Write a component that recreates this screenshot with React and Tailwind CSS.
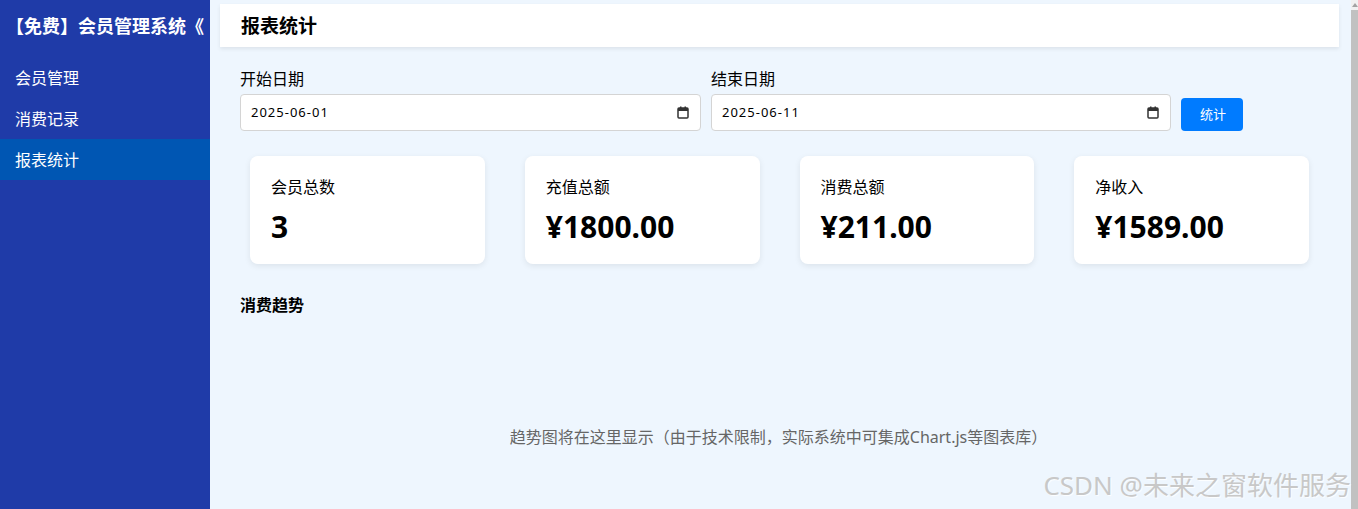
const font = { fontFamily: '"Noto Sans", "Noto Sans CJK SC", sans-serif' }

const menu = ['会员管理', '消费记录', '报表统计']

const stats = [
  { label: '会员总数', value: '3' },
  { label: '充值总额', value: '¥1800.00' },
  { label: '消费总额', value: '¥211.00' },
  { label: '净收入', value: '¥1589.00' },
]

function CalendarIcon() {
  return (
    <svg width="12" height="13" viewBox="0 0 12 13" className="shrink-0">
      <rect x="1" y="2" width="10" height="10" rx="1" fill="none" stroke="#333" strokeWidth="1.5" />
      <rect x="1" y="2" width="10" height="3" fill="#333" />
      <rect x="3" y="0.5" width="1.5" height="2.5" fill="#333" />
      <rect x="7.5" y="0.5" width="1.5" height="2.5" fill="#333" />
    </svg>
  )
}

function DateField({ label, value, width }) {
  return (
    <div className={`flex flex-col gap-[4px] ${width}`}>
      <label className="text-[16px] leading-[21px] text-black">{label}</label>
      <div className="flex h-[37px] items-center justify-between rounded-[4px] border border-[#d4d4d4] bg-white pl-[10px] pr-[11px]">
        <span className="text-[13px] tracking-[1px] text-black">{value}</span>
        <CalendarIcon />
      </div>
    </div>
  )
}

export default function App() {
  return (
    <div className="flex h-[509px] w-full overflow-hidden" style={font}>
      {/* 侧边栏 */}
      <aside className="flex w-[210px] shrink-0 flex-col bg-[#1f3ba8] text-white">
        <div className="flex h-[53px] items-center overflow-hidden whitespace-nowrap pl-[6px] text-[18px] font-bold">
          【免费】会员管理系统《
        </div>
        <nav className="mt-[4px] flex flex-col">
          {menu.map((m) => (
            <div
              key={m}
              className={`flex h-[41px] items-center pl-[15px] pt-[1px] text-[16px] ${m === '报表统计' ? 'bg-[#0056b3]' : ''}`}
            >
              {m}
            </div>
          ))}
        </nav>
      </aside>

      {/* 主区域 */}
      <main className="relative flex min-w-0 flex-1 flex-col bg-[#eef6fe]">
        <header className="ml-[10px] mr-[12px] mt-[4px] flex h-[43px] items-center bg-white pl-[21px] pt-[1px] shadow-[0_2px_4px_rgba(0,0,0,0.08)]">
          <h1 className="text-[19px] font-bold text-black">报表统计</h1>
        </header>

        <div className="flex flex-col px-[30px]">
          <div className="mt-[22px] flex items-end gap-[10px]">
            <DateField label="开始日期" value="2025-06-01" width="w-[461px]" />
            <DateField label="结束日期" value="2025-06-11" width="w-[460px]" />
            <button className="h-[33px] w-[62px] rounded-[4px] bg-[#007bff] pl-[2px] text-[13px] text-white">统计</button>
          </div>

          <div className="mt-[25px] grid grid-cols-4 gap-[40px] px-[10px] pr-[12px]">
            {stats.map((s) => (
              <div key={s.label} className="flex h-[108px] flex-col rounded-[8px] bg-white pl-[21px] pt-[21px] shadow-[0_2px_6px_rgba(0,0,0,0.08)]">
                <div className="text-[16px] leading-[20px] text-black">{s.label}</div>
                <div className="mt-[10px] text-[30px] font-bold leading-[40px] text-black">{s.value}</div>
              </div>
            ))}
          </div>

          <h2 className="mt-[31px] text-[16px] font-bold leading-[20px] text-black">消费趋势</h2>

          <div className="mt-[110px] pl-[6px] pr-[10px] text-center text-[16px] text-[#666]">
            趋势图将在这里显示（由于技术限制，实际系统中可集成Chart.js等图表库）
          </div>
        </div>

        <div className="pointer-events-none absolute bottom-[4px] right-[0px] whitespace-nowrap text-[26px] text-[#c8c8c8] [text-shadow:1px_1px_1px_rgba(255,255,255,0.9)]">
          CSDN @未来之窗软件服务
        </div>
      </main>

      {/* 滚动条 */}
      <div className="flex w-[7px] shrink-0 flex-col bg-[#f1f1f1]">
        <div className="flex h-[10px] items-center justify-center">
          <div className="h-0 w-0 border-x-[3px] border-b-[4px] border-x-transparent border-b-[#a3a3a3]" />
        </div>
        <div className="flex-1 bg-[#c1c1c1]" />
      </div>
    </div>
  )
}
